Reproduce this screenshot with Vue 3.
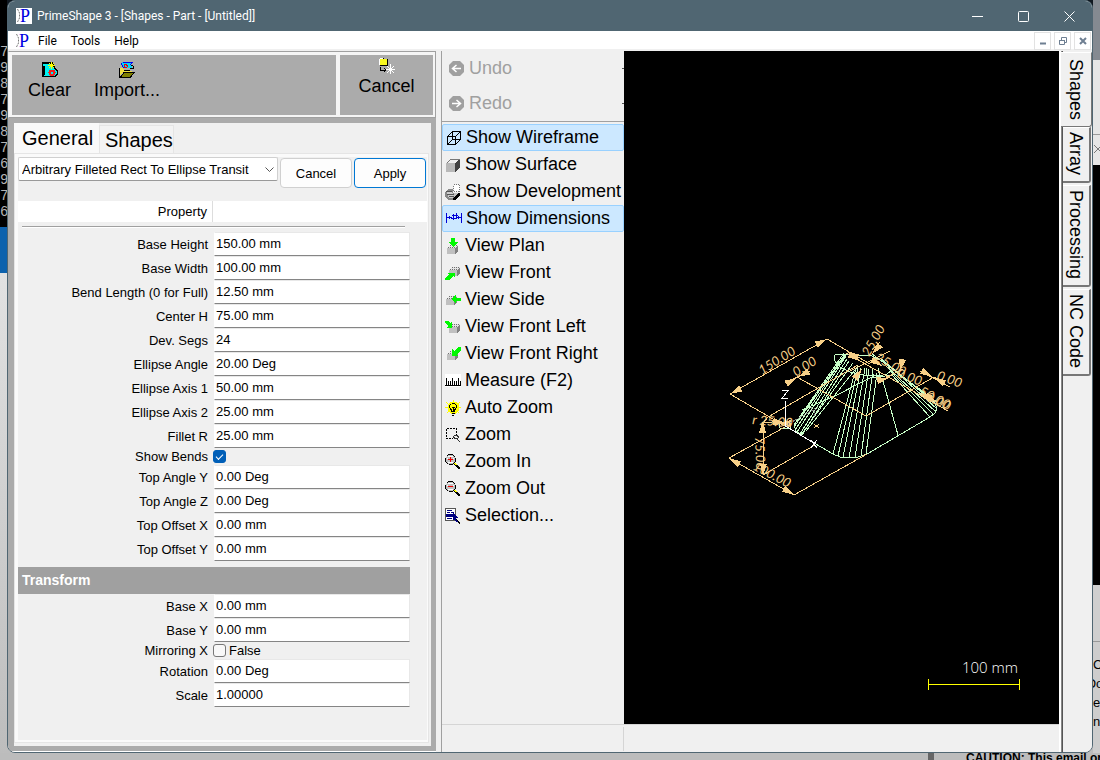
<script setup>
import { ref } from 'vue'

const K = '#000', G = '#c0c0c0', L = '#00f800', W = '#fff', B = '#0000d8', Y = '#ffff00'
const f = (fill, d) => ({ d, fill, stroke: 'none' })
const s = (stroke, d, w = 1) => ({ d, fill: 'none', stroke, w })
const cube = (x, y) => [
  f(G, `M${x} ${y + 3}h8v6h-8z`),
  f('#e4e4e4', `M${x} ${y + 3}l3 -3h8l-3 3z`),
  f('#808080', `M${x + 8} ${y + 3}l3 -3v6l-3 3z`),
  { d: `M${x + 1} ${y + 2.5}h7M${x + 3} ${y + 0.5}h7`, fill: 'none', stroke: '#707070', w: 1, dash: '1 1' }
]
const lens = [
  f(G, 'M3 1h5l2 2v5l-2 2h-5l-2 -2v-5z'),
  s(K, 'M3.5 .5h4M1.5 2.5l2 -2M.5 3.5v4M.5 7.5l3 3M3.5 10.5h4M7.5 10.5l3 -3M10.5 3.5v4M7.5 .5l3 3'),
  s(W, 'M3 2.5h5M2 4.5h1M8 4.5h1M3 8.5h5'),
  s(K, 'M10 10l5 5', 2), s(Y, 'M9.5 9l2 2M11.5 10.5l1 1')
]

const icons = {
  clear: [
    f(K, 'M0 0h11l2 5l3 4v3l-3 3h-13z'), f('#00f0f0', 'M1 2h8l3 4l3 4v1l-3 3h-10v-1h1v-9h-2z'),
    s('#f02020', 'M8.5 8.5h3l1 2l-1 2h-3l-1 -2z', 2), s(Y, 'M9.5 0v7M6 3.5h7M7 1l5 5M12 1l-5 5')
  ],
  import: [
    f('#00d8f8', 'M3 0h10l-1 2l1 4h-8l-3 -3z'), s('#0000f0', 'M3.5 .5h10M2.5 1.5l2 5M12.5 1l-1 2'),
    s('#f00000', 'M5.5 2.5h2l1 2l-1 1h-2z'), s(K, 'M11 6.5h4M14.5 4v3M12 3.5h2'),
    f('#f0e040', 'M0 6h4l2 3h7v1h-9l-4 5z'), f('#808000', 'M5 10h10l-4 5h-10z'), s(K, 'M.5 6v9h11l4 -5h-10l-4 5M5 8.5h6')
  ],
  cancel: [
    f('#f8f820', 'M1 1h7v6h-7z'), s(W, 'M1 .5h3M.5 1v6'), s(K, 'M1 7.5h8M8.5 1v7M4 .5h1'),
    s(K, 'M1.5 9v3h5M5 10l2 2l-2 2'), s(W, 'M11.5 6v10M7 11.5h9M8 8l7 7M15 8l-7 7')
  ],
  wire: [s(K, 'M1.5 6.5h8v8h-8zM1.5 6.5l5 -5h8v8l-5 5M9.5 6.5l5 -5M6.5 1.5v8h8M6.5 9.5l-5 5')],
  surface: [f('#b8b8b8', 'M1 6h9v9h-9z'), f('#eee', 'M1 6l4 -4h10l-5 4z'), f('#404040', 'M10 6l5 -4v9l-5 4z'), s('#777', 'M1.5 6.5l4 -4h9')],
  develop: [
    f('#888', 'M0 8l3 -3h5v4h7l-3 5l-5 2h-4l-3 -4z'), f('#ccc', 'M2 8h5l3 4l-3 2h-3z'), f(K, 'M10 9h5v2l-5 5h-2z'),
    f(G, 'M9 9h4l-3 4h-2z'),
    { d: 'M8.5 .5h6v7h-6z', fill: W, stroke: '#777', w: 1, dash: '1 1' }, s('#555', 'M1 7.5h6M2 10.5h7M4 12.5h5')
  ],
  dims: [s(B, 'M.5 2v10M15.5 2v10M1 6.5h5M11 6.5h4M3.5 5v3M12.5 5v3M2.5 6v1M7.5 3v6M10 2v6M6 4.5h6M5 7h6')],
  plan: [...cube(2, 7), f(L, 'M6 0h4v4h3l-5 5l-5 -5h3z')],
  front: [...cube(4, 2), f(L, 'M3 8h7v4h-1v-1l-5 4h-4v-2l4 -3z')],
  side: [...cube(1, 4), f(L, 'M6 7l5 -4v3h5v3h-5v3z')],
  fleft: [...cube(4, 5), f(L, 'M0 2h3l2 2l2 -2v7h-6l2 -2l-3 -3z')],
  fright: [...cube(2, 5), f(L, 'M16 1h-3l-4 4l-2 -2v7h6l-1 -2l4 -4z')],
  measure: [f(W, 'M0 1h16v13h-16z'), s(K, 'M0 12.5h16M1.5 5v8M3.5 8v5M5.5 8v5M7.5 5v8M9.5 8v5M11.5 8v5M13.5 5v8M15.5 8v5')],
  auto: [
    f(Y, 'M5 2h6l3 3v5l-4 4h-4l-3 -4v-5z'), s(Y, 'M8 0v2M1 2l2 2M15 2l-2 2M0 7.5h3M13 7.5h3M2 13l2 -2M14 13l-2 -2'),
    s(K, 'M6.5 3.5h3M4.5 5.5l1 -1M4.5 5v3M5.5 8l1 3M9.5 11l1 -3M11.5 5v3M10.5 4v1M6 11.5h4M6.5 13.5h3M7 15.5h2M6.5 7h3M8 8v3')
  ],
  zoom: [{ d: 'M1.5 1.5h10v8M1.5 1.5v10h6', fill: 'none', stroke: K, w: 1, dash: '2 1' }, s('#333', 'M9.5 8.5h3l1 2l-1 1h-3l-1 -2zM12.5 12.5l3 3')],
  zin: [...lens, s('#f00000', 'M3 5.5h5M5.5 3v5')],
  zout: [...lens, s('#f00000', 'M3 5.5h5')],
  select: [
    f(W, 'M1 1h10v11h-10z'), s('#555', 'M.5 .5h10v12h-10z'), s('#000080', 'M2 2.5h5M2 4.5h3M6 4.5h3M2 10.5h5'),
    f('#000080', 'M1 6h9v3h-9z'), f('#000080', 'M8 4l5 6h-2l2 4h-2l-2 -3l-1 1z'), s(K, 'M11 11l4 4.5')
  ],
  undo: [f('#a0a0a0', 'M4 0h7l4 4v7l-4 4h-7l-4 -4v-7z'), s(W, 'M4 7.5h8M7.5 4l-4 3.5l4 3.5', 1.5)],
  redo: [f('#a0a0a0', 'M4 0h7l4 4v7l-4 4h-7l-4 -4v-7z'), s(W, 'M3 7.5h8M7.5 4l4 3.5l-4 3.5', 1.5)]
}

const commands = [
  ['wire', 'Show Wireframe', true], ['surface', 'Show Surface'], ['develop', 'Show Development'],
  ['dims', 'Show Dimensions', true], ['plan', 'View Plan'], ['front', 'View Front'], ['side', 'View Side'],
  ['fleft', 'View Front Left'], ['fright', 'View Front Right'], ['measure', 'Measure (F2)'],
  ['auto', 'Auto Zoom'], ['zoom', 'Zoom'], ['zin', 'Zoom In'], ['zout', 'Zoom Out'], ['select', 'Selection...']
]

const shapeProps = ref([
  { label: 'Base Height', value: '150.00 mm' }, { label: 'Base Width', value: '100.00 mm' },
  { label: 'Bend Length (0 for Full)', value: '12.50 mm' }, { label: 'Center H', value: '75.00 mm' },
  { label: 'Dev. Segs', value: '24' }, { label: 'Ellipse Angle', value: '20.00 Deg' },
  { label: 'Ellipse Axis 1', value: '50.00 mm' }, { label: 'Ellipse Axis 2', value: '25.00 mm' },
  { label: 'Fillet R', value: '25.00 mm' }, { label: 'Show Bends', check: true, value: true, text: '' },
  { label: 'Top Angle Y', value: '0.00 Deg' }, { label: 'Top Angle Z', value: '0.00 Deg' },
  { label: 'Top Offset X', value: '0.00 mm' }, { label: 'Top Offset Y', value: '0.00 mm' }
])
const transformProps = ref([
  { label: 'Base X', value: '0.00 mm' }, { label: 'Base Y', value: '0.00 mm' },
  { label: 'Mirroring X', check: true, value: false, text: 'False' },
  { label: 'Rotation', value: '0.00 Deg' }, { label: 'Scale', value: '1.00000' }
])
const groups = [
  { id: 'shape', title: '', rows: shapeProps },
  { id: 'transform', title: 'Transform', rows: transformProps }
]

const sideTabs = ['Shapes', 'Array', 'Processing', 'NC Code']
const consoleRows = ['75', '95', '81', '75', '99', '80', '71', '61', '92', '78', '65']

const dimensionLines = [
  [730, 394, 827, 339], [730, 394, 785, 426], [827, 339, 870, 364], [797, 377, 866, 416], [866, 416, 934, 377],
  [785, 383, 810, 371], [768, 417, 858, 365], [763, 423, 763, 475], [729, 458, 794, 495], [729, 458, 785, 427],
  [794, 495, 867, 454], [763, 475, 815, 445], [920, 371, 950, 387], [846, 353, 948, 411], [763, 423, 782, 421],
  [850, 371, 890, 351], [878, 382, 903, 369], [768, 417, 763, 423], [872, 350, 880, 342], [900, 371, 900, 360]
]
const arrows = [
  [730, 394, -30], [827, 339, 150], [729, 458, 30], [794, 495, 210], [763, 421, 90], [763, 476, 270],
  [797, 378, 150], [798, 377, -30], [932, 377, 210], [934, 377, 30], [785, 424, 190],
  [847, 352, 25], [882, 366, 210], [872, 354, -50], [862, 369, 125], [900, 371, -80], [889, 378, 165],
  [920, 393, 25], [936, 402, 210], [860, 360, 205], [779, 423, 0]
]
const wires = [
  [845, 354, 794, 427], [846, 354, 795, 430], [846, 356, 797, 432], [847, 359, 800, 434], [849, 361, 802, 435],
  [853, 363, 801, 435], [858, 366, 806, 431], [844, 357, 794, 425],
  [856, 368, 833, 454], [858, 368, 838, 456], [861, 368, 843, 457], [865, 368, 849, 458], [869, 369, 855, 457],
  [873, 370, 861, 456], [877, 373, 866, 454], [883, 381, 898, 435],
  [872, 354, 937, 402], [880, 358, 937, 405], [884, 361, 937, 409], [886, 366, 936, 412], [890, 371, 934, 415], [892, 375, 930, 417],
  [866, 368, 867, 376], [872, 369, 874, 378], [878, 368, 880, 377]
]
const labels = [
  ['150.00', 762, 375, -32], ['0.00', 796, 377, -32], ['25.00', 869, 357, -60], ['0.00', 936, 379, 20],
  ['25.00', 874, 360, 30], ['50.00', 918, 394, 28], ['r 25.00', 752, 424, 5], ['75.00', 755, 437, 88],
  ['100.00', 752, 469, 28], ['0.00', 896, 377, 20], ['0.00', 925, 400, 25]
]
</script>

<template>
  <div class="desktop">
    <div class="strip strip-left">
      <div class="console"><span v-for="(row, i) in consoleRows" :key="i">{{ row }}</span></div>
      <div class="blue"></div>
      <div class="pale"></div>
    </div>

    <main class="window">
      <header class="titlebar">
        <svg class="logo boxed" viewBox="0 0 16 16">
          <path d="M1.5 1l2 4v5l-2 4" fill="none" stroke="#777" stroke-dasharray="2 1" />
          <text x="4" y="14" font-size="18">P</text>
        </svg>
        <h1>PrimeShape 3 - [Shapes - Part - [Untitled]]</h1>
        <button class="sys" aria-label="Minimize"><svg viewBox="0 0 11 11"><path d="M0 5.5h11" /></svg></button>
        <button class="sys" aria-label="Maximize"><svg viewBox="0 0 11 11"><rect x=".5" y=".5" width="10" height="10" rx="1" /></svg></button>
        <button class="sys" aria-label="Close"><svg viewBox="0 0 11 11"><path d="M.5 .5l10 10M10.5 .5l-10 10" /></svg></button>
      </header>

      <nav class="menubar">
        <svg class="logo" viewBox="0 0 16 16">
          <path d="M1.5 1l2 4v5l-2 4" fill="none" stroke="#777" stroke-dasharray="2 1" />
          <text x="4" y="14" font-size="18">P</text>
        </svg>
        <button>File</button><button>Tools</button><button>Help</button>
        <div class="mdi">
          <button aria-label="Minimize document"><svg viewBox="0 0 10 10"><path d="M2 7.5h6" stroke-width="2" /></svg></button>
          <button aria-label="Restore document"><svg viewBox="0 0 10 10"><path d="M1.5 4.5h5v4h-5zM3.5 4v-2.5h5v5h-2M1 4.5h6" /></svg></button>
          <button aria-label="Close document"><svg viewBox="0 0 10 10"><path d="M2 2l6 6M8 2l-6 6" stroke-width="2" /></svg></button>
        </div>
      </nav>

      <div class="body">
        <section class="left">
          <div class="actions">
            <div class="group wide">
              <button v-for="[icon, text] in [['clear', 'Clear'], ['import', 'Import...']]" :key="text">
                <svg class="icon" viewBox="0 0 16 16"><path v-for="(p, i) in icons[icon]" :key="i" :d="p.d" :fill="p.fill" :stroke="p.stroke" :stroke-width="p.w" /></svg>
                {{ text }}
              </button>
            </div>
            <div class="group narrow">
              <button>
                <svg class="icon" viewBox="0 0 16 16"><path v-for="(p, i) in icons.cancel" :key="i" :d="p.d" :fill="p.fill" :stroke="p.stroke" :stroke-width="p.w" /></svg>
                Cancel
              </button>
            </div>
          </div>

          <div class="frame">
            <div class="sheet">
              <div class="tabs" role="tablist">
                <button class="tab active" role="tab" aria-selected="true">General</button>
                <button class="tab" role="tab" aria-selected="false">Shapes</button>
              </div>
              <div class="page">
                <div class="picker">
                  <div class="combo">
                    <select aria-label="Shape type"><option>Arbitrary Filleted Rect To Ellipse Transit</option></select>
                    <svg viewBox="0 0 9 5"><path d="M.5 .5l4 4l4 -4" /></svg>
                  </div>
                  <button class="push">Cancel</button>
                  <button class="push default">Apply</button>
                </div>
                <div class="heading"><span>Property</span></div>
                <hr class="rule">
                <template v-for="g in groups" :key="g.id">
                  <h2 v-if="g.title">{{ g.title }}</h2>
                  <div v-for="(row, i) in g.rows.value" :key="row.label" class="row" :class="{ short: row.check }">
                    <label :for="g.id + i">{{ row.label }}</label>
                    <template v-if="row.check">
                      <input :id="g.id + i" v-model="row.value" type="checkbox">
                      <span class="state">{{ row.text }}</span>
                    </template>
                    <input v-else :id="g.id + i" v-model="row.value" type="text">
                  </div>
                </template>
              </div>
            </div>
          </div>
        </section>

        <section class="center">
          <div class="work">
            <div class="commands">
              <div class="history">
                <button v-for="[icon, text] in [['undo', 'Undo'], ['redo', 'Redo']]" :key="text" disabled>
                  <svg class="icon smooth" viewBox="0 0 16 16"><path v-for="(p, i) in icons[icon]" :key="i" :d="p.d" :fill="p.fill" :stroke="p.stroke" :stroke-width="p.w" /></svg>
                  {{ text }}<i class="caret"></i>
                </button>
              </div>
              <button v-for="[icon, text, on] in commands" :key="text" class="command" :class="{ on }">
                <svg class="icon" viewBox="0 0 16 16"><path v-for="(p, i) in icons[icon]" :key="i" :d="p.d" :fill="p.fill" :stroke="p.stroke" :stroke-width="p.w" :stroke-dasharray="p.dash" /></svg>
                {{ text }}
              </button>
            </div>

            <div class="viewport">
              <svg viewBox="624 51 435 673" preserveAspectRatio="xMidYMid meet">
                <g class="wires">
                  <line v-for="(l, i) in wires" :key="i" :x1="l[0]" :y1="l[1]" :x2="l[2]" :y2="l[3]" />
                  <path d="M794 425l2 6l6 5l31 18l7 3l9 1l9 -1l9 -3l63 -37l5 -4l2 -5l-3 -7l-50 -39l-12 -6l-27 -2l-10 1l-1 5l6 7l10 5l14 3l15 1l8 -2l4 -3l-3 -5l-7 -6M802 410l35 -15l23 -12l10 -5l22 -3M794 425l50 -72" />
                  <ellipse cx="785" cy="426" rx="6" ry="3" />
                </g>
                <g class="dims">
                  <line v-for="(l, i) in dimensionLines" :key="i" :x1="l[0]" :y1="l[1]" :x2="l[2]" :y2="l[3]" />
                  <path v-for="(a, i) in arrows" :key="'a' + i" class="arrow" d="M0 0L12 -3V4Z" :transform="`translate(${a[0]} ${a[1]}) rotate(${a[2]})`" />
                  <path d="M814 424l5 4M819 424l-5 4" />
                  <text v-for="(t, i) in labels" :key="'t' + i" :transform="`translate(${t[1]} ${t[2]}) rotate(${t[3]})`">{{ t[0] }}</text>
                </g>
                <g class="axes">
                  <path class="faint" d="M785 426l31 -18M811 407l3 4l4 -4M814 411v5" />
                  <path d="M785.5 401v25l30 18" />
                  <path d="M782 390.5h6l-6 8h6M811 440l6 8M817 440l-6 8" />
                </g>
                <text class="scale-text" x="962" y="673">100 mm</text>
                <path class="scale-bar" d="M928.5 679v11M1019.5 679v11M929 684.5h91" />
              </svg>
            </div>
          </div>
          <footer class="status"><span></span></footer>
        </section>

        <aside class="side" role="tablist">
          <button v-for="(t, i) in sideTabs" :key="t" role="tab" :aria-selected="i === 0" :class="{ active: i === 0 }">{{ t }}</button>
        </aside>
      </div>
    </main>

    <div class="strip strip-right">
      <div class="r1"></div>
      <div class="r2"><svg viewBox="0 0 8 8"><path d="M1 0l8 8M9 0l-8 8" /></svg></div>
      <div class="r3"></div>
      <div class="r4"><span>C</span><span class="shifted">Oo</span><span>ez</span><span>n</span></div>
    </div>
    <div class="under"><i></i><b>CAUTION: This email or</b></div>
  </div>
</template>

<style>
body { margin: 0; background: #000; }
</style>

<style scoped>
* { box-sizing: border-box; }
button, input, select { font: inherit; color: inherit; margin: 0; border-radius: 0; }
button { border: 0; padding: 0; background: none; text-align: left; }
svg { display: block; flex: none; }
.icon { width: 16px; height: 16px; shape-rendering: crispEdges; }
.smooth { shape-rendering: auto; }

.desktop {
  display: grid;
  grid-template-columns: 7px minmax(0, 1fr) 7px;
  grid-template-rows: minmax(0, 1fr) 7px;
  height: 100vh;
  min-height: 740px;
  overflow: hidden;
  background: linear-gradient(#101820 0 50%, #bdbdbd 50%);
  font-family: "Liberation Sans", Arial, sans-serif;
}
.strip { display: flex; flex-direction: column; overflow: hidden; }
.console {
  height: 227px; padding-top: 44px; background: #000; color: #b4b4b4;
  font: 14px/16px "Liberation Mono", monospace; overflow: hidden;
}
.console span { display: block; }
.blue { height: 46px; background: #0d62ad; }
.pale { flex: 1; background: linear-gradient(#e2e2e2, #bdbdbd); }
.r1 { height: 60px; background: #858a91; }
.r2 { height: 105px; background: linear-gradient(#e6e6e6 74px, #9a9a9a 74px 75px, #e6e6e6 75px); padding-top: 85px; }
.r2 svg { width: 8px; height: 8px; stroke: #777; }
.r3 { height: 420px; background: #000; }
.r4 {
  flex: 1; padding-top: 70px; background: linear-gradient(#cfcfcf 56px, #999 56px 57px, #cdcdcd 57px);
  font-size: 13px; line-height: 19px; overflow: hidden;
}
.r4 span { display: block; }
.r4 .shifted { margin-left: -7px; }
.under { grid-column: 1 / 4; display: flex; align-items: flex-start; overflow: hidden; background: #bcbcbc; }
.under i { width: 6px; height: 7px; margin-left: auto; background: #666; }
.under b { width: 134px; margin-left: 32px; font-size: 12px; line-height: 10px; white-space: nowrap; }

.window {
  display: flex; flex-direction: column; overflow: hidden;
  border: 1px solid #506672; border-radius: 8px; background: #f0f0f0;
}
.titlebar {
  display: flex; align-items: center; height: 30px; padding-left: 8px; flex: none;
  background: #506672; color: #fff; font-family: Roboto, sans-serif;
}
.logo { width: 16px; height: 16px; }
.logo text { fill: #0000e0; font-family: "Liberation Serif", serif; }
.boxed { background: #fff; }
h1 { flex: 1; margin: 0 0 0 5px; font-size: 12px; line-height: 16px; font-weight: 400; }
.sys { width: 46px; height: 30px; display: flex; align-items: center; justify-content: center; }
.sys svg { width: 11px; height: 11px; fill: none; stroke: #fff; }

.menubar {
  display: flex; align-items: center; gap: 14px; height: 20px; padding-left: 7px; flex: none;
  background: linear-gradient(#fff 18px, #f0f0f0 18px); font: 12px/18px Roboto, sans-serif;
}
.menubar .logo { margin-right: -7px; }
.mdi { display: flex; gap: 3px; margin-left: auto; padding-right: 1px; }
.mdi button { width: 17px; height: 18px; border: 1px solid #e2e2e2; display: flex; align-items: center; justify-content: center; }
.mdi svg { width: 10px; height: 10px; fill: none; stroke: #6e7f92; }

.body { flex: 1; display: flex; min-height: 0; }
.left { width: 428px; flex: none; display: flex; flex-direction: column; }
.actions {
  display: flex; gap: 4px; height: 67px; padding: 3px 2px 2px 3px; flex: none;
  border: 1px solid #a0a0a0; border-left-color: #f0f0f0; background: #f5f5f5; font-size: 18px; line-height: 20px;
}
.group { display: flex; background: #ababab; }
.group button { display: flex; flex-direction: column; align-items: center; align-self: flex-start; }
.wide { flex: 1; gap: 23px; padding: 7px 0 0 16px; }
.wide button { gap: 2px; }
.narrow { width: 93px; padding-top: 3px; justify-content: center; }
.narrow button { gap: 2px; }
.frame { flex: 1; display: flex; padding: 5px 5px 5px 6px; background: #ababab; border-bottom: 1px solid #fff; min-height: 0; }
.sheet { flex: 1; display: flex; flex-direction: column; background: #f0f0f0; min-width: 0; }
.tabs { display: flex; align-items: flex-end; height: 30px; flex: none; font-size: 20px; line-height: 26px; }
.tab { height: 28px; width: 75px; padding-left: 5px; border: 1px solid #e5e5e5; border-bottom: 0; background: #f3f3f3; }
.tab.active { height: 30px; width: 85px; padding: 0 0 0 8px; background: #f9f9f9; border: 0; }
.page {
  flex: 1; margin: 0 2px 3px 0; border: solid #fafafa; border-width: 4px 2px 3px 4px;
  outline: 1px solid #e5e5e5; outline-offset: -1px; font-size: 13px;
}
.picker { display: flex; gap: 2px; height: 44px; margin-right: 1px; align-items: flex-start; }
.combo { position: relative; flex: 1; height: 24px; }
.combo select {
  width: 100%; height: 24px; padding: 0 16px 0 3px; appearance: none;
  border: 1px solid #d0d0d0; border-bottom-color: #999; background: #fff; border-radius: 2px;
}
.combo svg { position: absolute; right: 4px; top: 10px; width: 9px; height: 5px; fill: none; stroke: #555; pointer-events: none; }
.push { width: 72px; height: 30px; margin-top: 1px; border: 1px solid #d0d0d0; border-radius: 4px; background: #fdfdfd; text-align: center; }
.push.default { border-color: #0078d4; }
.heading { height: 21px; background: #fff; line-height: 21px; text-align: right; display: flex; }
.heading span { width: 195px; padding-right: 5px; border-right: 1px solid #ddd; }
.rule { height: 2px; margin: 4px 22px 4px 4px; border: 0; border-top: 1px solid #a0a0a0; background: #fff; }
.row { display: flex; align-items: center; height: 24px; margin-right: 17px; }
.row label { width: 190px; padding-top: 1px; text-align: right; flex: none; }
.row input[type="text"] {
  flex: 1; min-width: 0; height: 24px; margin-left: 6px; padding: 0 0 1px 1px;
  border: 1px solid #e8e8e8; border-left-color: #fff; border-bottom-color: #858585; background: #fff; outline: 0;
}
.row.short { height: 17px; }
.row.short label { padding-top: 0; }
.row input[type="checkbox"] {
  appearance: none; width: 13px; height: 13px; margin: 0 3px 0 5px;
  border: 1px solid #777; border-radius: 3px; background: #f8f8f8; display: grid; place-items: center;
}
.row input[type="checkbox"]:checked { background: #005fb8; border-color: #005fb8; }
.row input[type="checkbox"]:checked::before {
  content: ""; width: 6px; height: 3px; margin-bottom: 2px;
  border: solid #fff; border-width: 0 0 1px 1px; transform: rotate(-45deg);
}
h2 { height: 27px; margin: 6px 17px 0 0; padding-left: 4px; background: #a0a0a0; color: #fff; font-size: 14px; line-height: 26px; }

.center { flex: 1; min-width: 0; margin-left: 5px; border-left: 1px solid #a0a0a0; display: flex; flex-direction: column; }
.work { flex: 1; display: flex; min-height: 0; }
.commands { width: 182px; flex: none; font-size: 18px; }
.history { border-bottom: 1px solid #a0a0a0; margin-bottom: 2px; }
.history button { display: flex; align-items: center; gap: 4px; width: 100%; height: 35px; padding-left: 7px; color: #a0a0a0; }
.caret { width: 2px; height: 1px; margin-left: auto; background: #555; }
.command { display: flex; align-items: center; gap: 4px; width: 100%; height: 27px; padding-left: 3px; white-space: nowrap; }
.command.on { border: 1px solid #99d1ff; border-radius: 2px; background: #cce8ff; }
.viewport { flex: 1; min-width: 0; background: #000; }
.viewport svg { width: 100%; height: 100%; }
.wires, .dims, .axes { fill: none; stroke: #c8ffc8; shape-rendering: crispEdges; }
.dims { stroke: #f8d088; }
.dims .arrow { fill: #f8d088; stroke: none; }
.dims text { fill: #f8d088; stroke: none; font: italic 13px Lato, sans-serif; }
.axes { stroke: #fff; }
.faint { stroke: #888; stroke-dasharray: 2 1; }
.scale-text { fill: #fff; font: 300 15px "Open Sans", sans-serif; }
.scale-bar { fill: none; stroke: #ffff00; shape-rendering: crispEdges; }
.status { height: 28px; flex: none; border-top: 1px solid #d5d5d5; padding: 2px 0 1px; display: flex; }
.status span { width: 182px; border-right: 1px solid #d5d5d5; }

.side {
  width: 33px; flex: none; display: flex; flex-direction: column; gap: 2px; align-items: flex-start;
  border-left: 2px solid #fff; background: linear-gradient(90deg, #888 1px, #555 1px 2px, #f0f0f0 2px); font-size: 18px;
}
.side button {
  width: 28px; margin-left: 2px; padding: 4px 0 6px; writing-mode: vertical-rl; line-height: 24px;
  background: #f0f0f0; border: 1px solid #777; border-width: 0 2px 2px 0; border-top: 1px solid #fff; border-bottom-right-radius: 3px;
}
.side button.active { width: 31px; margin: 1px 0 -2px; padding: 6px 0; border-width: 1px 1px 1px 0; }
</style>
